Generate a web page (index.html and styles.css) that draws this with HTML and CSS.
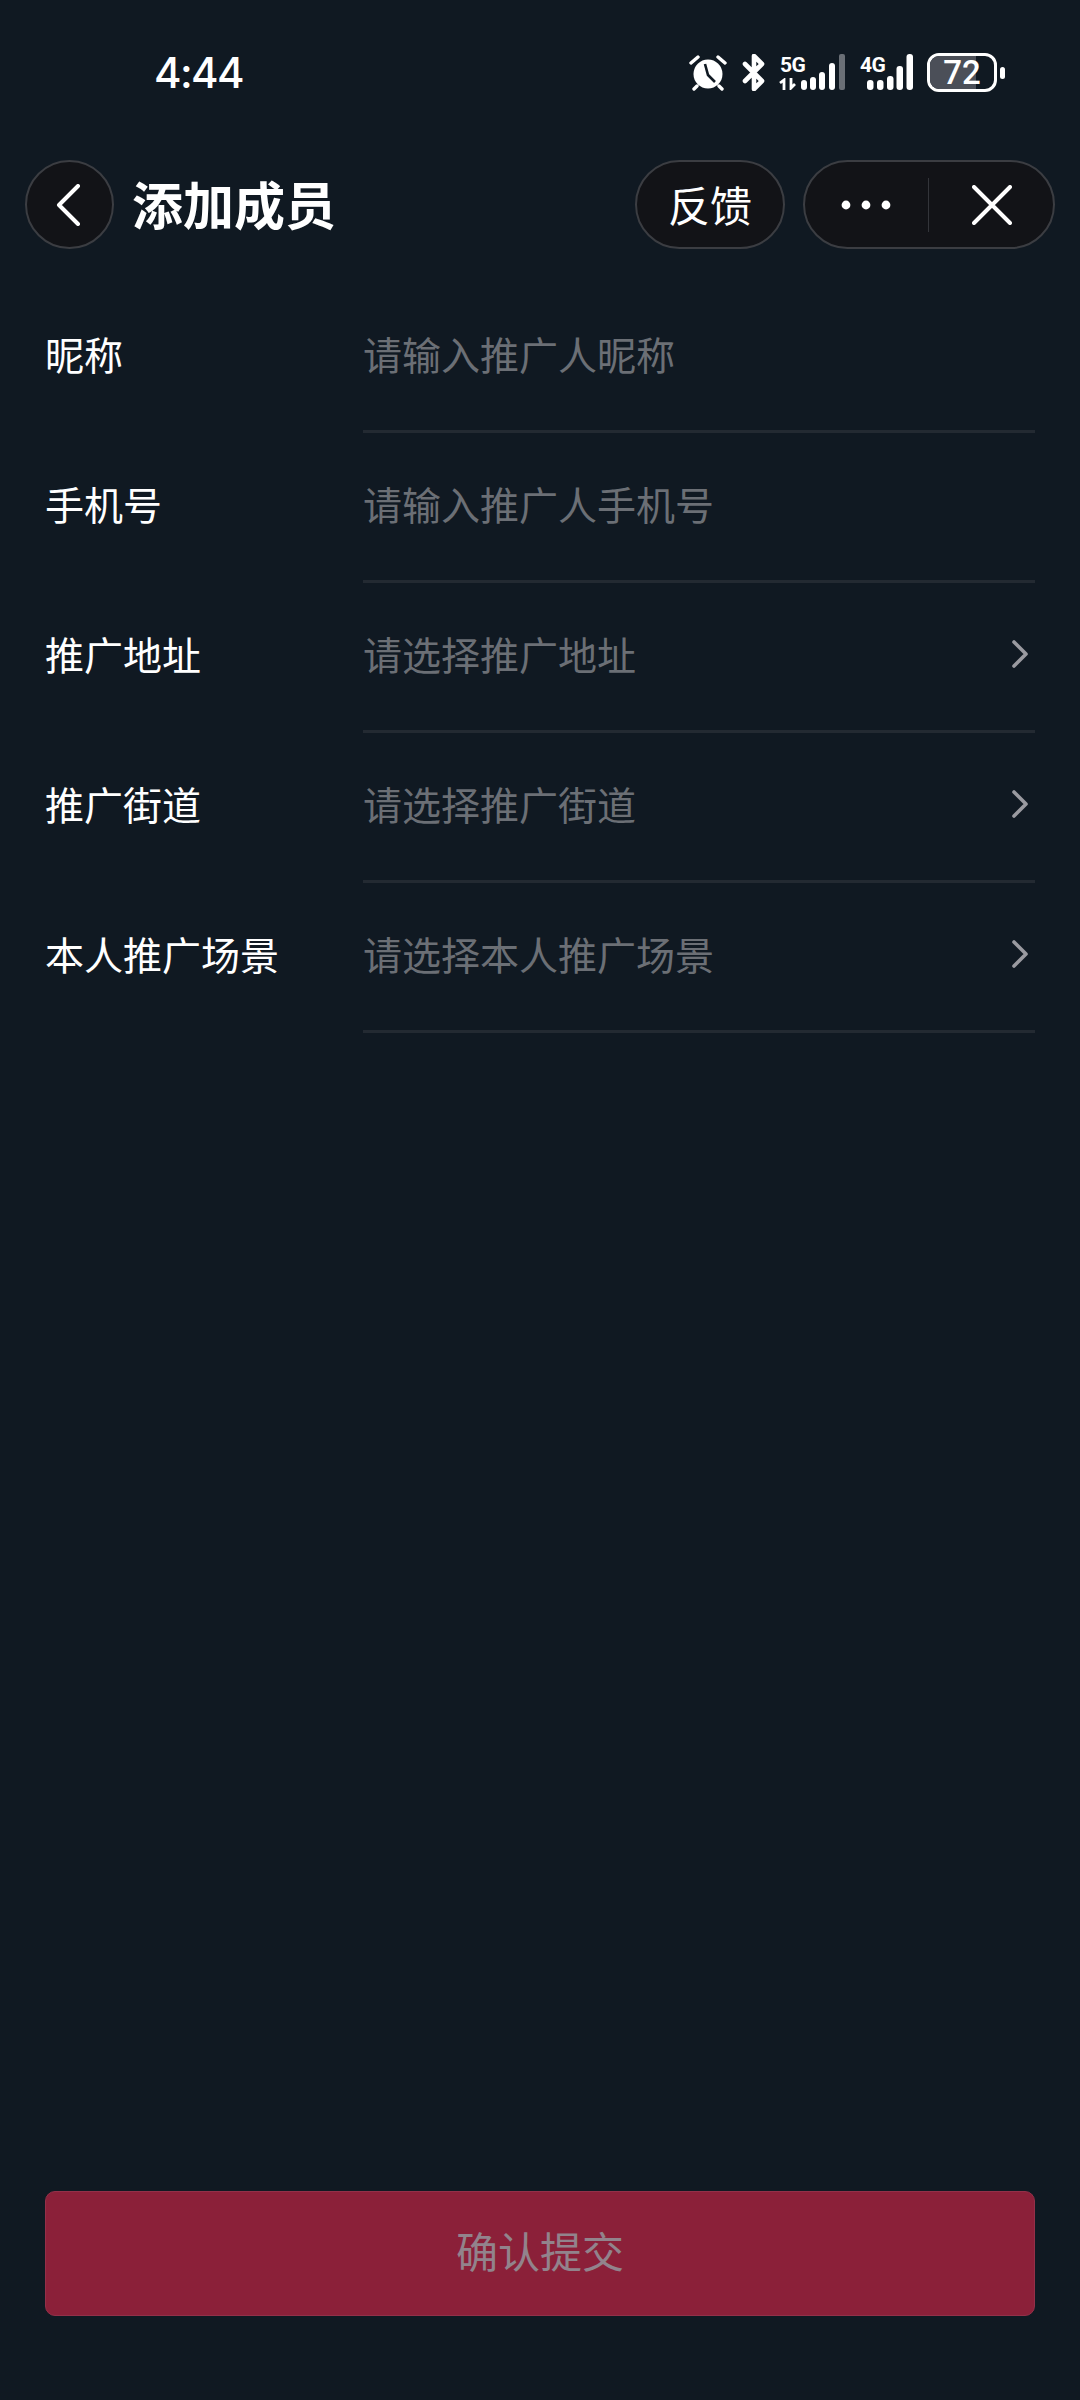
FILE: index.html
```html
<!DOCTYPE html>
<html lang="zh">
<head>
<meta charset="utf-8">
<title>添加成员</title>
<link rel="stylesheet" href="styles.css">
</head>
<body>
<div class="page">
  <div class="status">
    <span class="time">4:44</span>
    <div class="status-icons">
      <svg class="ic-alarm" width="38" height="37" viewBox="0 0 38 37"><circle cx="19" cy="20" r="14.5" fill="#fff"/><path d="M16 10 L19 21 L26 28" fill="none" stroke="#101922" stroke-width="2.6"/><path d="M2 9 L9 3 M36 9 L29 3 M8 32 L5 35 M30 32 L33 35" stroke="#fff" stroke-width="3.4" stroke-linecap="round"/></svg>
      <svg class="ic-bt" width="24" height="37" viewBox="0 0 24 37"><path d="M3 10 L20 27 L12 35 V2 L20 10 L3 27" fill="none" stroke="#fff" stroke-width="4.6" stroke-linejoin="round" stroke-linecap="round"/></svg>
      <div class="net net-5g">
        <span class="net-label">5G</span>
        <svg class="net-arrows" width="18" height="12" viewBox="0 0 18 12"><path d="M5 12 V2 L1 5 M12 0 V10 L16 6" fill="none" stroke="#fff" stroke-width="2.8"/></svg>
        <svg class="net-bars" width="46" height="36" viewBox="0 0 46 36"><g fill="#fff"><rect x="0" y="26" width="6" height="10" rx="3"/><rect x="9" y="23" width="6" height="13" rx="3"/><rect x="18" y="18" width="6" height="18" rx="3"/><rect x="28" y="9" width="6" height="27" rx="3"/></g><rect x="38" y="0" width="6" height="36" rx="2" fill="#6a6f76"/></svg>
      </div>
      <div class="net net-4g">
        <span class="net-label">4G</span>
        <svg class="net-bars" width="47" height="36" viewBox="0 0 47 36"><g fill="#fff"><rect x="0" y="26" width="6.5" height="10" rx="3"/><rect x="10" y="26" width="6.5" height="10" rx="3"/><rect x="20" y="22" width="6.5" height="14" rx="3"/><rect x="29.500" y="12" width="6.500" height="24" rx="3"/><rect x="39.500" y="0" width="6.500" height="36" rx="3"/></g></svg>
      </div>
      <div class="battery">
        <div class="battery-body"><div class="battery-fill"></div><span class="battery-num">72</span></div>
        <div class="battery-nub"></div>
      </div>
    </div>
  </div>

  <div class="nav">
    <button class="circle-btn" aria-label="返回">
      <svg width="26" height="42" viewBox="0 0 26 42"><path d="M22 2 L3 21 L22 40" fill="none" stroke="#fff" stroke-width="4" stroke-linecap="round" stroke-linejoin="round"/></svg>
    </button>
    <h1 class="title">添加成员</h1>
    <button class="pill-btn">反馈</button>
    <div class="capsule">
      <div class="capsule-cell">
        <svg width="50" height="10" viewBox="0 0 50 10"><g fill="#fff"><circle cx="5" cy="5" r="4.400"/><circle cx="25" cy="5" r="4.400"/><circle cx="45" cy="5" r="4.400"/></g></svg>
      </div>
      <div class="capsule-divider"></div>
      <div class="capsule-cell capsule-close">
        <svg width="40" height="40" viewBox="0 0 40 40"><path d="M2 2 L38 38 M38 2 L2 38" fill="none" stroke="#fff" stroke-width="4" stroke-linecap="round"/></svg>
      </div>
    </div>
  </div>

  <form class="form">
    <div class="row">
      <span class="label">昵称</span>
      <div class="field"><span class="placeholder">请输入推广人昵称</span></div>
    </div>
    <div class="row">
      <span class="label">手机号</span>
      <div class="field"><span class="placeholder">请输入推广人手机号</span></div>
    </div>
    <div class="row">
      <span class="label">推广地址</span>
      <div class="field"><span class="placeholder">请选择推广地址</span>
        <svg class="chev" width="16" height="28" viewBox="0 0 16 28"><path d="M2 2 L14 14 L2 26" fill="none" stroke="#9a9aa0" stroke-width="3.6" stroke-linecap="round" stroke-linejoin="round"/></svg></div>
    </div>
    <div class="row">
      <span class="label">推广街道</span>
      <div class="field"><span class="placeholder">请选择推广街道</span>
        <svg class="chev" width="16" height="28" viewBox="0 0 16 28"><path d="M2 2 L14 14 L2 26" fill="none" stroke="#9a9aa0" stroke-width="3.6" stroke-linecap="round" stroke-linejoin="round"/></svg></div>
    </div>
    <div class="row">
      <span class="label">本人推广场景</span>
      <div class="field"><span class="placeholder">请选择本人推广场景</span>
        <svg class="chev" width="16" height="28" viewBox="0 0 16 28"><path d="M2 2 L14 14 L2 26" fill="none" stroke="#9a9aa0" stroke-width="3.6" stroke-linecap="round" stroke-linejoin="round"/></svg></div>
    </div>
  </form>

  <div class="footer">
    <button class="submit" type="button">确认提交</button>
  </div>
</div>
</body>
</html>
```
FILE: styles.css
```css
* { box-sizing: border-box; }
html, body { margin: 0; padding: 0; background: #101922; }
body { font-family: "Noto Sans CJK SC", "Noto Sans", sans-serif; color: #fff; }
button { font-family: inherit; padding: 0; }
.page { width: 1080px; height: 2400px; display: flex; flex-direction: column; background: #101922; overflow: hidden; }

.status { height: 160px; padding: 54px 75px 0 154px; display: flex; justify-content: space-between; align-items: flex-start; }
.time { font-family: Inter, Roboto, sans-serif; font-size: 42px; line-height: 38px; font-weight: 500; letter-spacing: -1.6px; }
.status-icons { display: flex; align-items: flex-start; height: 38px; }
.ic-alarm { margin-right: 15px; }
.ic-bt { margin-right: 13px; }
.net { position: relative; height: 38px; }
.net-5g { width: 80px; }
.net-4g { width: 68px; }
.net-label { position: absolute; left: 1px; top: 1px; font-family: "Roboto", sans-serif; font-weight: 700; font-size: 21px; line-height: 20px; letter-spacing: -0.5px; }
.net-arrows { position: absolute; left: 0; bottom: 2px; }
.net-5g .net-bars { position: absolute; left: 22px; top: 0; }
.net-4g .net-bars { position: absolute; left: 8px; top: 0; }
.battery { display: flex; align-items: center; margin-top: -1px; }
.battery-body { position: relative; width: 70px; height: 39px; border: 3px solid #fff; border-radius: 12px; overflow: hidden; display: flex; align-items: center; justify-content: center; }
.battery-fill { position: absolute; left: 0; top: 0; bottom: 0; width: 72%; background: #4b4f58; }
.battery-num { position: relative; font-family: Roboto, sans-serif; font-size: 33px; line-height: 32px; font-weight: 500; }
.battery-nub { width: 5px; height: 12px; margin-left: 3px; background: #fff; border-radius: 3px; }

.nav { height: 89px; padding: 0 25px; display: flex; align-items: center; }
.circle-btn { width: 89px; height: 89px; border-radius: 50%; background: #121317; border: 2px solid #3b3d42; display: flex; align-items: center; justify-content: center; padding-right: 2px; }
.title { flex: 1; margin: 0 0 4px 18px; font-size: 51px; line-height: 60px; font-weight: 700; }
.pill-btn { width: 150px; height: 89px; border-radius: 45px; background: #121317; border: 2px solid #3b3d42; color: #fff; font-size: 42px; line-height: 50px; padding-bottom: 2px; margin-right: 18px; }
.capsule { width: 252px; height: 89px; border-radius: 45px; background: #121317; border: 2px solid #3b3d42; display: flex; align-items: center; }
.capsule-cell { flex: 1; display: flex; align-items: center; justify-content: center; }
.capsule-close { padding-left: 3px; }
.capsule-divider { width: 1px; height: 54px; margin-left: 1px; background: #33353a; }

.form { padding-top: 34px; display: flex; flex-direction: column; }
.row { height: 150px; display: flex; padding: 0 45px; }
.label { width: 318px; flex: none; padding-top: 43px; font-size: 39px; line-height: 54px; }
.field { flex: 1; height: 150px; display: flex; justify-content: space-between; align-items: flex-start; padding-top: 43px; border-bottom: 3px solid #232a32; }
.placeholder { font-size: 39px; line-height: 54px; color: #6b6f75; }
.chev { margin: 14px 7px 0 0; }

.footer { margin-top: auto; padding: 0 45px 84px; }
.submit { display: block; width: 990px; height: 125px; border: 1px solid #933049; border-radius: 10px; background: #8b2039; color: #92838c; font-size: 42px; line-height: 54px; padding-bottom: 8px; }
```
